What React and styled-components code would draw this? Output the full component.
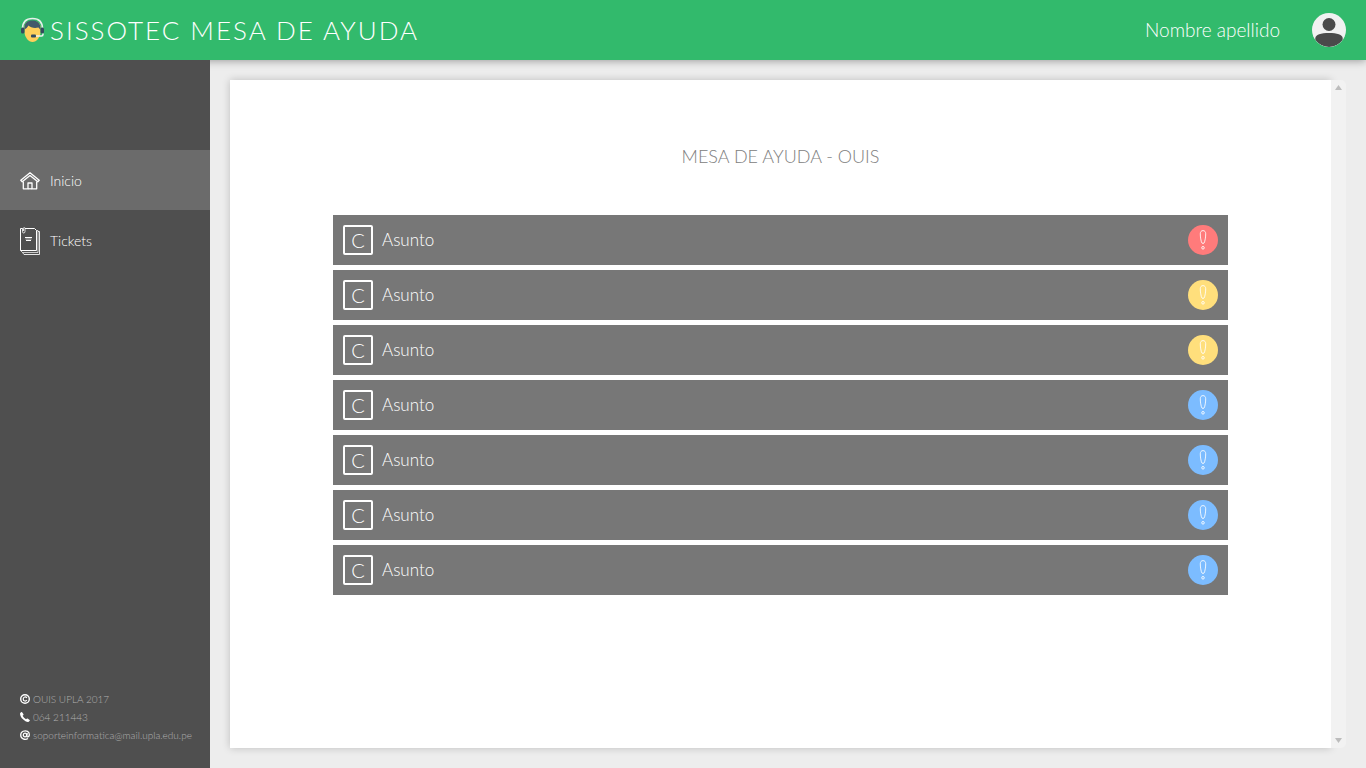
import React from "react";
import styled, { createGlobalStyle } from "styled-components";

const GlobalStyle = createGlobalStyle`
  * { box-sizing: border-box; }
  body {
    margin: 0;
    background: #ededed;
    font-family: Lato, "Liberation Sans", sans-serif;
    font-weight: 300;
  }
  svg { flex: none; }
`;

const Page = styled.div`
  min-height: 100vh;
  display: flex;
  flex-direction: column;
`;

const Header = styled.header`
  height: 60px;
  flex: none;
  display: flex;
  align-items: center;
  justify-content: space-between;
  padding: 0 20px;
  background: #32ba6c;
  color: #fff;
  box-shadow: 0 1px 8px rgba(0, 0, 0, 0.35);
`;

const Brand = styled.h1`
  display: flex;
  align-items: center;
  gap: 5px;
  margin: 0;
  font-size: 26px;
  line-height: 32px;
  font-weight: 300;
  letter-spacing: 2px;
  white-space: nowrap;
`;

const User = styled.div`
  display: flex;
  align-items: center;
  gap: 32px;
  font-size: 19px;
  line-height: 24px;
`;

const AvatarButton = styled.button`
  display: flex;
  padding: 0;
  border: 0;
  border-radius: 50%;
  background: none;
  cursor: pointer;
`;

const Body = styled.div`
  flex: 1;
  display: flex;
`;

const Sidebar = styled.aside`
  width: 210px;
  flex: none;
  display: flex;
  flex-direction: column;
  justify-content: space-between;
  padding: 90px 0 24px;
  background: #4f4f4f;
  position: relative;
`;

const NavLink = styled.a`
  height: 60px;
  display: flex;
  align-items: center;
  gap: 10px;
  padding: 2px 20px 0;
  background: ${({ $active }) => ($active ? "#6b6b6b" : "transparent")};
  color: #fff;
  font-size: 14px;
  line-height: 20px;
  text-decoration: none;
`;

const Contact = styled.footer`
  display: flex;
  flex-direction: column;
  padding: 0 20px;
  color: #b0b0b0;
`;

const ContactLine = styled.div`
  display: flex;
  align-items: center;
  gap: 3px;
  font-size: 10px;
  line-height: 18px;
  white-space: nowrap;
`;

const MailLink = styled.a`
  color: inherit;
  text-decoration: none;
`;

const Main = styled.main`
  flex: 1;
  min-width: 0;
  display: flex;
  padding: 20px;
`;

const Panel = styled.section`
  flex: 1;
  min-width: 0;
  padding: 64px 103px;
  background: #fff;
  box-shadow: 0 0 8px rgba(0, 0, 0, 0.2);
`;

const ScrollRail = styled.div`
  position: relative;
  width: 15px;
  flex: none;
  display: flex;
  flex-direction: column;
  justify-content: space-between;
  background: #f2f2f2;
  border-radius: 0 5px 5px 0;
`;

const ScrollButton = styled.button`
  height: 15px;
  display: flex;
  align-items: center;
  justify-content: center;
  padding: 0;
  border: 0;
  background: none;
`;

const Title = styled.h2`
  margin: 0 0 47px;
  color: #808080;
  font-size: 18px;
  line-height: 24px;
  font-weight: 300;
  text-align: center;
`;

const TicketList = styled.ul`
  display: grid;
  gap: 5px;
  margin: 0;
  padding: 0;
  list-style: none;
`;

const Ticket = styled.li`
  height: 50px;
  display: flex;
  align-items: center;
  gap: 9px;
  padding: 0 10px;
  background: #777;
  color: #fff;
`;

const Category = styled.span`
  width: 30px;
  height: 30px;
  display: flex;
  align-items: center;
  justify-content: center;
  border: 2px solid #fff;
  border-radius: 2px;
  font-size: 20px;
  line-height: 24px;
`;

const Subject = styled.span`
  flex: 1;
  font-size: 17px;
  line-height: 24px;
`;

const Priority = styled.span`
  width: 30px;
  height: 30px;
  display: flex;
  align-items: center;
  justify-content: center;
  border-radius: 50%;
  background: ${({ $color }) => $color};
`;

const AgentIcon = () => (
  <svg width="25" height="26" viewBox="0 0 25 26" aria-hidden="true">
    <path d="M2.500 12C2.500 5 6.500 1.500 12.500 1.500S22.500 5 22.500 12" fill="none" stroke="#e8f0ec" strokeWidth="1.600" />
    <path d="M4.500 9.500C5 5.500 8 4 12.500 4S20 6 20.500 9.500V15C20.500 20 16.500 25 12.500 25S4.500 20 4.500 15Z" fill="#ffd05b" />
    <path d="M4.500 12.500C4 5.500 7.500 3.500 12.500 3.500S21 6 20.500 13L18.500 10.500C14 11.500 10.500 10.500 8.500 8.500C7.500 10.500 6 11.500 4.500 12.500Z" fill="#415a6b" />
    <rect x="1" y="10.500" width="3.500" height="6" rx="1.500" fill="#344a5e" />
    <rect x="20.500" y="10.500" width="3.500" height="6" rx="1.500" fill="#344a5e" />
    <path d="M15 19H21.500Q23 19 23 17.500V16.500" fill="none" stroke="#f2f2f2" strokeWidth="1.500" />
    <rect x="11" y="17.500" width="5" height="3" rx="1" fill="#344a5e" />
  </svg>
);

const AvatarIcon = () => (
  <svg width="34" height="34" viewBox="0 0 34 34" aria-hidden="true">
    <defs>
      <clipPath id="avatar"><circle cx="17" cy="17" r="17" /></clipPath>
    </defs>
    <circle cx="17" cy="17" r="17" fill="#f1f1f1" />
    <circle cx="17" cy="11.500" r="6.500" fill="#4a4a4a" />
    <path clipPath="url(#avatar)" d="M3.300 27V25.500C3.300 21.500 9 20 17 20S30.700 21.500 30.700 25.500V27Q25 34 17 34T3.300 27Z" fill="#4a4a4a" />
  </svg>
);

const HomeIcon = () => (
  <svg width="20" height="18" viewBox="0 0 20 18" fill="none" stroke="#fff" strokeWidth="1.300" strokeLinejoin="round" aria-hidden="true">
    <path d="M10 .8 .8 8.300 2.200 9.800 10 3.600 17.800 9.800 19.200 8.300Z" />
    <path d="M3.300 9.500V16.800H8V11H12V16.800H16.700V9.500" />
    <path d="M8 16.800H12" />
  </svg>
);

const TicketsIcon = () => (
  <svg width="20" height="28" viewBox="0 0 20 28" fill="none" stroke="#fff" strokeWidth="1" strokeLinejoin="round" aria-hidden="true">
    <path d="M2 1.500H.5V23.500H16.500V3.500L14.500 1.500H5" />
    <path d="M16.500 3.500H18V25.500H2.500L.5 23.500" strokeOpacity=".7" />
    <path d="M18 4.500H19.500V27.500H4L2.500 25.500" strokeOpacity=".85" />
    <path d="M2.500 1V4.500Q2.500 6 3.700 6T5 4.500V1.500Q5 .5 4.200 .5T3.500 1.500V4" strokeOpacity=".8" />
    <path d="M5 10.500H12M6 13.500H11" />
    <path d="M5.500 12H11.500" strokeOpacity=".6" />
  </svg>
);

const CopyrightIcon = () => (
  <svg width="10" height="10" viewBox="0 0 10 10" fill="none" stroke="#fff" aria-hidden="true">
    <circle cx="5" cy="5" r="4.300" strokeWidth="1.400" />
    <path d="M6.800 3.900C6 2.300 3.200 2.700 3.200 5S6 7.700 6.800 6.100" strokeWidth="1.200" />
  </svg>
);

const PhoneIcon = () => (
  <svg width="10" height="10" viewBox="0 0 10 10" fill="#fff" aria-hidden="true">
    <path d="M.2 1.100 1.400 .1Q2 -.1 2.300 .4L3.500 2.300Q3.700 2.800 3.200 3.200L2.600 3.700Q3.800 5.900 6 7.300L6.700 6.700Q7.100 6.300 7.600 6.600L9.600 7.900Q10.100 8.300 9.700 8.800L8.800 9.800Q7.500 10.300 5.500 9.200Q.5 6.200 0 2Z" />
  </svg>
);

const AtIcon = () => (
  <svg width="10" height="10" viewBox="0 0 10 10" fill="none" stroke="#fff" strokeWidth="1.300" aria-hidden="true">
    <path d="M8 8.500C5 10.300 .7 8.800 .7 5S5 .1 7.500 1.300C10 2.500 9.800 6.800 7.700 6.900Q6.500 6.900 6.800 5.500L7.200 3" />
    <ellipse cx="5" cy="5" rx="1.700" ry="1.900" />
  </svg>
);

const AlertIcon = () => (
  <svg width="8" height="20" viewBox="0 0 8 20" fill="none" stroke="#fff" strokeOpacity=".85" aria-hidden="true">
    <path d="M4 .6C2.200 .6 1.300 1.900 1.300 3.800C1.300 7 1.800 9.500 2.400 11.800Q2.800 13.500 4 13.500T5.600 11.800C6.200 9.500 6.700 7 6.700 3.800C6.700 1.900 5.800 .6 4 .6Z" />
    <circle cx="4" cy="17.800" r="1.300" />
  </svg>
);

const ArrowIcon = ({ down }) => (
  <svg width="7" height="5" viewBox="0 0 7 5" fill="#bcbcbc" aria-hidden="true">
    <path d={down ? "M0 0H7L3.500 5Z" : "M0 5H7L3.500 0Z"} />
  </svg>
);

const PRIORITY = {
  alta: "#ff7b7b",
  media: "#ffdf7c",
  baja: "#7cbcff",
};

const tickets = ["alta", "media", "media", "baja", "baja", "baja", "baja"];

export default function App() {
  return (
    <Page>
      <GlobalStyle />
      <Header>
        <Brand>
          <AgentIcon />
          SISSOTEC MESA DE AYUDA
        </Brand>
        <User>
          Nombre apellido
          <AvatarButton type="button" aria-label="Perfil">
            <AvatarIcon />
          </AvatarButton>
        </User>
      </Header>
      <Body>
        <Sidebar>
          <nav>
            <NavLink href="#inicio" $active aria-current="page">
              <HomeIcon />
              Inicio
            </NavLink>
            <NavLink href="#tickets">
              <TicketsIcon />
              Tickets
            </NavLink>
          </nav>
          <Contact>
            <ContactLine><CopyrightIcon />OUIS UPLA 2017</ContactLine>
            <ContactLine><PhoneIcon />064 211443</ContactLine>
            <ContactLine>
              <AtIcon />
              <MailLink href="mailto:soporteinformatica@mail.upla.edu.pe">
                soporteinformatica@mail.upla.edu.pe
              </MailLink>
            </ContactLine>
          </Contact>
        </Sidebar>
        <Main>
          <Panel>
            <Title>MESA DE AYUDA - OUIS</Title>
            <TicketList>
              {tickets.map((level, i) => (
                <Ticket key={i}>
                  <Category>C</Category>
                  <Subject>Asunto</Subject>
                  <Priority $color={PRIORITY[level]} role="img" aria-label={`Prioridad ${level}`}>
                    <AlertIcon />
                  </Priority>
                </Ticket>
              ))}
            </TicketList>
          </Panel>
          <ScrollRail>
            <ScrollButton type="button" aria-label="Subir"><ArrowIcon /></ScrollButton>
            <ScrollButton type="button" aria-label="Bajar"><ArrowIcon down /></ScrollButton>
          </ScrollRail>
        </Main>
      </Body>
    </Page>
  );
}
